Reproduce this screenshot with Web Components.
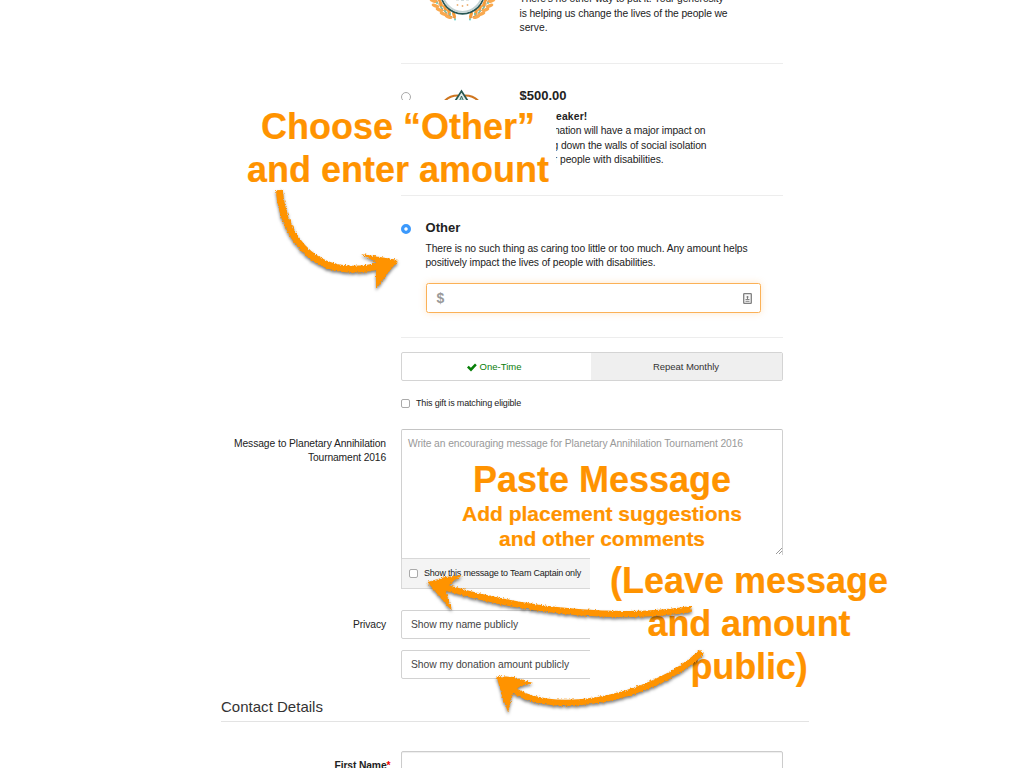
<!DOCTYPE html>
<html lang="en">
<head>
<meta charset="utf-8">
<title>Donate</title>
<style>
html,body{margin:0;padding:0}
body{width:1024px;height:768px;overflow:hidden;position:relative;background:#fff;color:#222;font-family:"Liberation Sans",Arial,sans-serif;font-size:10.3px;line-height:14.4px}
</style>
</head>
<body>
<donation-form>
  <tier-option class="field" style="height:63px" foot="27.5">
    <medal-art slot="art" kind="bottom"></medal-art>
    <fit-line w="204">There’s no other way to put it. Your generosity</fit-line>
    <fit-line w="208">is helping us change the lives of the people we</fit-line>
    <fit-line w="28">serve.</fit-line>
  </tier-option>
  <tier-option class="field" style="height:131px" foot="27.5" radio="off">
    <medal-art slot="art" kind="top"></medal-art>
    <fit-line s="13" b w="47" h="18">$500.00</fit-line>
    <fit-line b w="68" gap="4.8">Wall Breaker!</fit-line>
    <fit-line w="186">Your donation will have a major impact on</fit-line>
    <fit-line w="187">breaking down the walls of social isolation</fit-line>
    <fit-line w="144">for other people with disabilities.</fit-line>
  </tier-option>
  <tier-option class="field" style="height:141px" foot="24" radio="on">
    <fit-line s="13" b w="35" h="18">Other</fit-line>
    <fit-line w="322" gap="4.8">There is no such thing as caring too little or too much. Any amount helps</fit-line>
    <fit-line w="230">positively impact the lives of people with disabilities.</fit-line>
    <amount-input></amount-input>
  </tier-option>
  <frequency-toggle class="field"></frequency-toggle>
  <check-line class="field" style="margin-top:15px"><fit-line s="9" w="105">This gift is matching eligible</fit-line></check-line>
  <form-row style="margin-top:18px">
    <fit-line slot="label" w="152">Message to Planetary Annihilation</fit-line>
    <fit-line slot="label" w="78">Tournament 2016</fit-line>
    <message-box></message-box>
  </form-row>
  <form-row style="margin-top:21px">
    <fit-line slot="label" w="33">Privacy</fit-line>
    <select-box><fit-line w="107">Show my name publicly</fit-line></select-box>
    <select-box><fit-line w="158">Show my donation amount publicly</fit-line></select-box>
  </form-row>
  <section-title><fit-line s="15" w="102" h="20">Contact Details</fit-line></section-title>
  <form-row style="margin-top:29px">
    <required-label slot="label"><fit-line b w="52">First Name</fit-line></required-label>
    <text-input></text-input>
  </form-row>
</donation-form>

<callout-note style="left:240px;top:100px;width:316px;height:88px;--pad:5px;--fill:#fff">
  <fit-line s="36" b w="274" h="43">Choose “Other”</fit-line>
  <fit-line s="36" b w="302" h="43">and enter amount</fit-line>
</callout-note>
<callout-note style="left:442px;top:458px;width:320px;height:98px">
  <fit-line s="36" b w="258" h="43">Paste Message</fit-line>
  <fit-line s="21" b w="280" h="25">Add placement suggestions</fit-line>
  <fit-line s="21" b w="206" h="25">and other comments</fit-line>
</callout-note>
<callout-note style="left:590px;top:555px;width:318px;height:145px;--pad:4px;--fill:#fff">
  <fit-line s="36" b w="278" h="43">(Leave message</fit-line>
  <fit-line s="36" b w="203" h="43">and amount</fit-line>
  <fit-line s="36" b w="117" h="43">public)</fit-line>
</callout-note>
<sketch-arrows></sketch-arrows>

<script>
const define=(name,html,setup)=>customElements.define(name,class extends HTMLElement{
  connectedCallback(){
    if(this.shadowRoot)return;
    this.attachShadow({mode:'open'}).innerHTML=html;
    if(setup)setup(this,this.shadowRoot);
  }
});

define('donation-form',`<style>
:host{display:flex;flex-direction:column;width:588px;margin-left:221px;height:768px;overflow:hidden}
::slotted(*){flex-shrink:0}
::slotted(.field){margin-left:180px;width:382px}
</style><slot></slot>`);

define('tier-option',`<style>
:host{display:grid;grid-template-columns:24.5px auto 1fr;box-sizing:content-box;border-bottom:1px solid #ededed}
.art{position:relative}
.art.has{width:94px}
.body{display:flex;flex-direction:column;justify-content:flex-end;min-height:0;height:100%;box-sizing:border-box}
.radio{box-sizing:border-box;width:10px;height:10px;border-radius:50%;border:1px solid #aaa;background:#fff;display:none}
.mark{padding-top:27.5px}
.radio.off{display:block}.radio.on{display:block;border:3.400px solid #3b99fc;background:radial-gradient(#fff 1.300px,#3b99fc 2.400px)}
</style><div class="mark"><div class="radio"></div></div><div class="art"><slot name="art"></slot></div><div class="body"><slot></slot></div>`,(h,r)=>{
  r.querySelector('.radio').classList.add(h.getAttribute('radio')||'none');
  r.querySelector('.body').style.paddingBottom=h.getAttribute('foot')+'px';
  if(h.querySelector('[slot=art]'))r.querySelector('.art').classList.add('has');
});

define('medal-art',`<style>:host{display:block;width:94px;height:40px}svg{display:block}</style><svg width="94" height="40"></svg>`,(h,r)=>{
  const s=r.querySelector('svg');
  if(h.getAttribute('kind')==='top'){
    h.style.paddingTop='24px';
    s.innerHTML=`<path d="M19 12.500Q24 7.500 32 7.500M52 12.500Q47 7.500 39 7.500" fill="none" stroke="#cf7620" stroke-width="2"/><path d="M28.500 14L35.500 3L42.500 14" fill="#e3eeeb" stroke="#28584f" stroke-width="1.700"/><path d="M33 14l2.500-6 2.500 6" fill="#9fc9c1" stroke="#28584f" stroke-width=".8"/>`;
    return;
  }
  let leaves='';
  const stem=[[8,1,15,-8],[10,6,20,0],[14,10,20,3],[18,14,25,6],[23,17,29,10]];
  for(const m of [1,-1]){
    let g='';
    for(const [x,y] of stem){
      g+=`<ellipse cx="${x-.5}" cy="${y}" rx="4" ry="1.800" transform="rotate(18 ${x} ${y})" fill="#f9a94f"/><ellipse cx="${x+5}" cy="${y-2}" rx="3.500" ry="1.600" transform="rotate(72 ${x+5} ${y-2})" fill="#f79b38"/><circle cx="${x+1}" cy="${y-3}" r=".9" fill="#4fd0c8"/><circle cx="${x+6}" cy="${y+2.500}" r=".9" fill="#4fd0c8"/>`;
    }
    g+='<path d="M9-4Q14 12 30 19" stroke="#c98844" stroke-width=".7" fill="none"/>';
    leaves+=m>0?`<g>${g}</g>`:`<g transform="translate(73 0) scale(-1 1)">${g}</g>`;
  }
  s.innerHTML=leaves+`<circle cx="36.500" cy="-8" r="21.800" fill="#fff" stroke="#285653" stroke-width="1.700"/><circle cx="36.500" cy="-8" r="19.800" fill="none" stroke="#c3d2d2" stroke-width="1.800"/><g fill="#edb277"><circle cx="31.500" cy="5" r=".9"/><circle cx="36.500" cy="6" r=".9"/><circle cx="41.500" cy="5" r=".9"/></g><path d="M30 0h3M35 .3h3M40 0h3" stroke="#c5d2d2"/>`;
});

define('amount-input',`<style>
:host{display:flex;align-items:center;justify-content:space-between;box-sizing:border-box;width:335px;height:30px;margin-top:12.600px;flex-shrink:0;border:1.500px solid #fbb157;border-radius:2.500px;padding:0 8px 0 10px;box-shadow:0 0 7px rgba(255,165,60,.28);background:#fff;color:#999;font-size:14px;font-weight:bold}
svg{display:block}
</style><span>$</span><svg width="9" height="11"><rect x=".7" y=".7" width="7.600" height="9.600" rx=".6" fill="#f8f8f8" stroke="#808080" stroke-width="1.300"/><circle cx="4.500" cy="3.900" r="1" fill="#777"/><path d="M4.500 4v2M2.500 6.500h4M2.500 8.300h4" stroke="#777" stroke-width=".9"/></svg>`);

define('frequency-toggle',`<style>
:host{display:grid;grid-template-columns:189px 1fr;box-sizing:border-box;height:29px;margin-top:14px;border:1px solid #d4d4d4;border-radius:2px;overflow:hidden}
div{display:flex;align-items:center;justify-content:center;gap:3px;padding-top:1px}
.on{color:#0a7d0a;padding-right:5px}.off{background:#efefef;color:#333;padding-right:1px}
</style><div class="on"><svg width="10" height="9"><path d="M0 4.500L1.700 2.700L3.900 4.800L8 .5L9.800 2.200L4 8.400Z" fill="#087f08"/></svg><fit-line s="9.500" w="42">One-Time</fit-line></div><div class="off"><fit-line s="9.500" w="66">Repeat Monthly</fit-line></div>`);

define('check-line',`<style>
:host{display:flex;align-items:center;gap:6px;height:15px}
i{box-sizing:border-box;width:9px;height:9px;border:1px solid #aaa;border-radius:2px;background:#fff}
</style><i></i><slot></slot>`);

define('form-row',`<style>
:host{display:grid;grid-template-columns:165px 382px;column-gap:15px}
.label{display:flex;flex-direction:column;align-items:flex-end;padding-top:7.600px}
.body{display:flex;flex-direction:column;gap:11px}
</style><div class="label"><slot name="label"></slot></div><div class="body"><slot></slot></div>`);

define('message-box',`<style>
:host{display:block}
.area{position:relative;box-sizing:border-box;height:130px;border:1px solid #d0d0d0;border-radius:2px 2px 0 0;border-top-color:#c4c4c4;border-bottom-color:#d8d8d8;padding:7px 6px;color:#999}
svg{position:absolute;right:0;bottom:4px}
.foot{box-sizing:border-box;height:30px;border:1px solid #d8d8d8;border-top:0;background:#f4f4f4;padding:7px 7px}
check-line{margin-left:0}
</style><div class="area"><fit-line w="335">Write an encouraging message for Planetary Annihilation Tournament 2016</fit-line><svg width="6" height="6"><path d="M0 6L6 0M3 6L6 3" stroke="#999"/></svg></div><div class="foot"><check-line><fit-line s="9" w="157">Show this message to Team Captain only</fit-line></check-line></div>`);

define('select-box',`<style>
:host{display:flex;align-items:center;box-sizing:border-box;height:29px;border:1px solid #d2d2d2;border-radius:2px;padding:2px 0 0 9px;color:#444}
</style><slot></slot>`);

define('section-title',`<style>:host{display:block;margin-top:18px;height:24px;border-bottom:1px solid #e3e3e3;color:#333}</style><slot></slot>`);
define('required-label',`<style>:host{display:flex;margin-right:-5.500px}b{color:#e00;width:5px}</style><slot></slot><b>*</b>`);
define('text-input',`<style>:host{display:block;box-sizing:border-box;height:30px;border:1px solid #ccc;border-radius:2px;box-shadow:inset 0 1px 1px #eee}</style>`);

define('callout-note',`<style>
:host{display:flex;flex-direction:column;align-items:center;position:absolute;box-sizing:border-box;padding-top:var(--pad,0);background:var(--fill,transparent);color:#ff9300;-webkit-text-stroke:.2px #ff9300}
</style><slot></slot>`);

define('sketch-arrows',`<style>:host{display:block;position:absolute;inset:0;pointer-events:none}svg{display:block}</style>
<svg width="1024" height="768" fill="none" stroke="#ff9300">
<defs><filter id="chalk" filterUnits="userSpaceOnUse" x="0" y="0" width="1024" height="768" color-interpolation-filters="sRGB">
<feTurbulence type="fractalNoise" baseFrequency=".6" numOctaves="2" seed="4" result="n"/>
<feDisplacementMap in="SourceGraphic" in2="n" scale="3.600" xChannelSelector="R" yChannelSelector="G" result="d"/>
<feDropShadow in="d" dx="0" dy="2" stdDeviation="1.800" flood-color="#000" flood-opacity=".5"/>
</filter></defs>
<g filter="url(#chalk)">
<path d="M279.500 190C281 222 305 287 384 264.500" stroke-width="7"/>
<path d="M361 254L380 257L398.500 260L388 273L376 289L376 272L379 264Z" fill="#ff9300" stroke="none"/>
<path d="M691.500 609C630 619 540 615 447 588" stroke-width="6.300"/>
<path d="M427.500 582L445 577L463 575L450 584L446 592L452 611L439 596Z" fill="#ff9300" stroke="none"/>
<path d="M702 652C650 701 545 719 508 686" stroke-width="6.300"/>
<path d="M496.500 676L514 677L533 683L519 687L513 693L508 712L502 696Z" fill="#ff9300" stroke="none"/>
</g></svg>`);

/* One line of text; letter-spacing is tuned so that it spans w pixels. */
define('fit-line',`<style>:host{display:block;white-space:nowrap;flex-shrink:0}</style><span><slot></slot></span>`,(h,r)=>{
  const a=n=>h.getAttribute(n);
  if(a('s'))h.style.fontSize=a('s')+'px'; else h.style.fontSize='10.3px';
  if(h.hasAttribute('b'))h.style.fontWeight='bold';
  if(a('h'))h.style.lineHeight=a('h')+'px';
  if(a('gap'))h.style.marginTop=a('gap')+'px';
  const natural=r.querySelector('span').getBoundingClientRect().width;
  h.style.letterSpacing=((+a('w')-natural)/h.textContent.length)+'px';
});
</script>
</body>
</html>
